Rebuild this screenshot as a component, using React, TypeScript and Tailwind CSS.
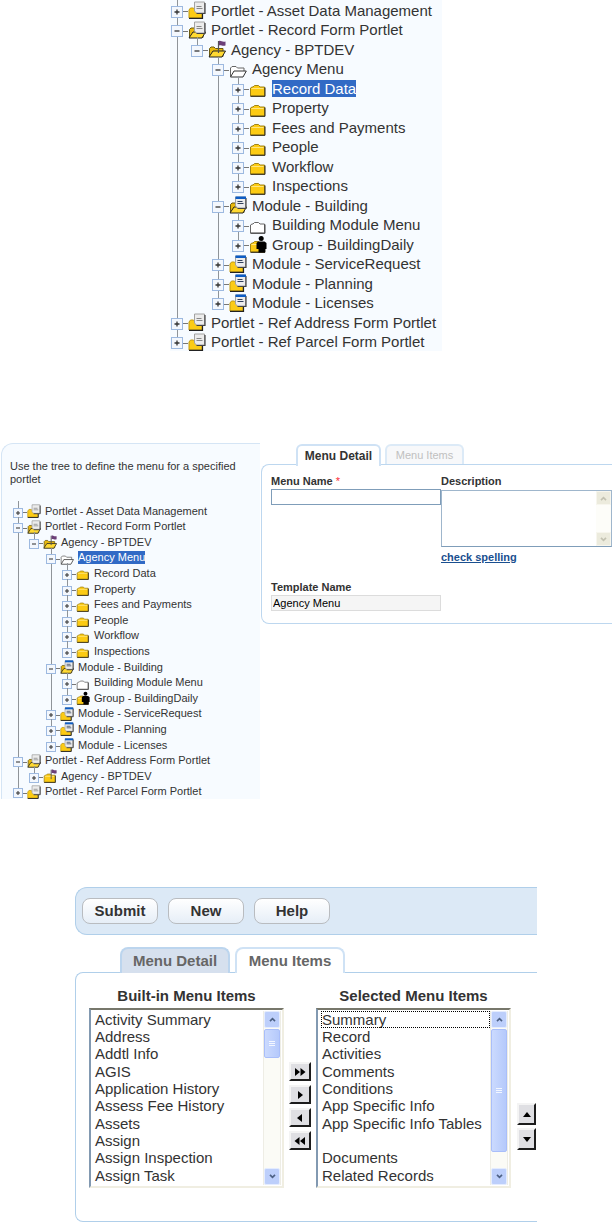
import { ReactNode } from 'react';

type IconName =
  | 'portlet'
  | 'portlet-open'
  | 'agency'
  | 'agency-open'
  | 'menu-open'
  | 'folder'
  | 'folder-white'
  | 'module'
  | 'module-open'
  | 'group';

interface TreeNode {
  depth: number;
  label: string;
  icon: IconName;
  open?: boolean;
  selected?: boolean;
}

const AGENCY_MENU_ITEMS: TreeNode[] = [
  { depth: 3, label: 'Property', icon: 'folder' },
  { depth: 3, label: 'Fees and Payments', icon: 'folder' },
  { depth: 3, label: 'People', icon: 'folder' },
  { depth: 3, label: 'Workflow', icon: 'folder' },
  { depth: 3, label: 'Inspections', icon: 'folder' },
];

const MODULES: TreeNode[] = [
  { depth: 2, label: 'Module - Building', icon: 'module-open', open: true },
  { depth: 3, label: 'Building Module Menu', icon: 'folder-white' },
  { depth: 3, label: 'Group - BuildingDaily', icon: 'group' },
  { depth: 2, label: 'Module - ServiceRequest', icon: 'module' },
  { depth: 2, label: 'Module - Planning', icon: 'module' },
  { depth: 2, label: 'Module - Licenses', icon: 'module' },
];

const RECORD_TREE: TreeNode[] = [
  { depth: 0, label: 'Portlet - Asset Data Management', icon: 'portlet' },
  { depth: 0, label: 'Portlet - Record Form Portlet', icon: 'portlet-open', open: true },
  { depth: 1, label: 'Agency - BPTDEV', icon: 'agency-open', open: true },
  { depth: 2, label: 'Agency Menu', icon: 'menu-open', open: true },
  { depth: 3, label: 'Record Data', icon: 'folder', selected: true },
  ...AGENCY_MENU_ITEMS,
  ...MODULES,
  { depth: 0, label: 'Portlet - Ref Address Form Portlet', icon: 'portlet' },
  { depth: 0, label: 'Portlet - Ref Parcel Form Portlet', icon: 'portlet' },
];

const MENU_TREE: TreeNode[] = [
  { depth: 0, label: 'Portlet - Asset Data Management', icon: 'portlet' },
  { depth: 0, label: 'Portlet - Record Form Portlet', icon: 'portlet-open', open: true },
  { depth: 1, label: 'Agency - BPTDEV', icon: 'agency-open', open: true },
  { depth: 2, label: 'Agency Menu', icon: 'menu-open', open: true, selected: true },
  { depth: 3, label: 'Record Data', icon: 'folder' },
  ...AGENCY_MENU_ITEMS,
  ...MODULES,
  { depth: 0, label: 'Portlet - Ref Address Form Portlet', icon: 'portlet-open', open: true },
  { depth: 1, label: 'Agency - BPTDEV', icon: 'agency' },
  { depth: 0, label: 'Portlet - Ref Parcel Form Portlet', icon: 'portlet' },
];

const BUILT_IN = [
  'Activity Summary',
  'Address',
  'Addtl Info',
  'AGIS',
  'Application History',
  'Assess Fee History',
  'Assets',
  'Assign',
  'Assign Inspection',
  'Assign Task',
];

const SELECTED = [
  'Summary',
  'Record',
  'Activities',
  'Comments',
  'Conditions',
  'App Specific Info',
  'App Specific Info Tables',
  '',
  'Documents',
  'Related Records',
];

// ── Tree icons, all on an 18x18 grid ──

function ClosedFolder({ white }: { white?: boolean }) {
  return (
    <>
      <path
        d="M1.5 17V9L3 8h1l1.500-1.500h4L11 8h4.500v9z"
        fill={white ? '#fff' : '#fccb14'}
        stroke={white ? '#666' : '#a08418'}
      />
      {!white && <path d="M2.500 9.500h12" stroke="#ffe680" />}
      <path d="M1.500 17.300H16V8.500" fill="none" stroke={white ? '#444' : '#2a2413'} />
    </>
  );
}

function BackFolder({ open }: { open: boolean }) {
  if (open) {
    return (
      <>
        <path d="M1.5 16.500V8.500L3 7h3l1.500 1.500H15v8z" fill="#e9b90c" stroke="#6b5a10" />
        <path d="M1 17l4-6h12.500l-3.500 6z" fill="#ffd932" stroke="#222" />
      </>
    );
  }
  return (
    <>
      <path d="M1 17V9l1.500-2h3L7 8.500h7V17z" fill="#fccb14" stroke="#c19b12" />
      <path d="M1 17.300h13.500V12" fill="none" stroke="#222" strokeWidth="1.200" />
    </>
  );
}

function Page({ header }: { header?: boolean }) {
  return (
    <>
      <path d="M6.500 1h10v11H8.500l-2-2z" fill="#ececec" stroke="#a2a2a2" />
      <path d="M8.500 12.500H17V2" fill="none" stroke="#444" strokeWidth="1.200" />
      {header && <rect x="6.500" y=".5" width="10.500" height="2.500" fill="#0d5cc4" />}
      <path d="M8.500 5.500h5M8.500 7.500h6" stroke={header ? '#33425c' : '#888'} />
    </>
  );
}

function Flag() {
  return (
    <>
      <path d="M10.500 1v12" stroke="#555" strokeWidth="1.200" />
      <path d="M11 1c2-1 3 1.500 6.500.5v4c-3.500 1-4.500-1-6.500 0z" fill="#6b3f78" />
    </>
  );
}

function Person() {
  return (
    <>
      <circle cx="12.200" cy="3.500" r="2.500" fill="#000" />
      <path d="M9 6.500h6.500L17.500 8v6H16v3.500H9.500V14H7.500V8z" fill="#000" />
    </>
  );
}

const ICONS: Record<IconName, ReactNode> = {
  portlet: <><BackFolder open={false} /><Page /></>,
  'portlet-open': <><BackFolder open /><Page /></>,
  agency: <><ClosedFolder /><Flag /></>,
  'agency-open': <><BackFolder open /><Flag /></>,
  'menu-open': (
    <>
      <path d="M1.500 16.500V8L3 6.500h4L8.500 8H15v3" fill="#fff" stroke="#666" />
      <path d="M1.500 17 5 11h12.300L14 17z" fill="#fff" stroke="#333" />
    </>
  ),
  folder: <ClosedFolder />,
  'folder-white': <ClosedFolder white />,
  module: <><BackFolder open={false} /><Page header /></>,
  'module-open': <><BackFolder open /><Page header /></>,
  group: <><ClosedFolder /><Person /></>,
};

// ── Tree ──

const TREE_SIZES = {
  lg: {
    row: 'h-5 even:h-[19px] text-[15px] leading-[17px]',
    indent: 'w-5 even:w-[21px]',
    toggle: 'size-3',
    cell: 'w-[17px]',
    line: 'left-[6px]',
    icon: 'size-[18px]',
    gap: 'ml-[5px]',
  },
  sm: {
    row: 'h-4 nth-[5n+2]:h-[15px] nth-[5n+4]:h-[15px] text-[11px] leading-[13px]',
    indent: 'w-4 even:w-[17px]',
    toggle: 'size-[10px]',
    cell: 'w-[14px]',
    line: 'left-[5px]',
    icon: 'size-[14px]',
    gap: 'ml-1',
  },
};

// True when a sibling of the given depth still follows row i
function continues(nodes: TreeNode[], i: number, depth: number) {
  for (let j = i + 1; j < nodes.length; j++) {
    if (nodes[j].depth < depth) return false;
    if (nodes[j].depth === depth) return true;
  }
  return false;
}

function Tree({ nodes, size, label }: { nodes: TreeNode[]; size: 'lg' | 'sm'; label: string }) {
  const s = TREE_SIZES[size];
  return (
    <ul aria-label={label}>
      {nodes.map((node, i) => (
        <li key={i} className={`flex whitespace-nowrap ${s.row}`}>
          {Array.from({ length: node.depth }, (_, d) => (
            <span key={d} className={`relative shrink-0 ${s.indent}`}>
              {continues(nodes, i, d) && (
                <span className={`absolute inset-y-0 w-px bg-[#8f9499] ${s.line}`} />
              )}
            </span>
          ))}
          <span className={`relative flex shrink-0 items-center pt-[3px] ${s.cell}`}>
            <span
              className={`absolute -top-[2px] w-px bg-[#8f9499] ${s.line}
                ${continues(nodes, i, node.depth) ? 'bottom-0' : 'bottom-1/2'}`}
            />
            <button
              aria-label={`${node.open ? 'Collapse' : 'Expand'} ${node.label}`}
              className={`relative shrink-0 border border-[#9db9e0] bg-[#f3f7fd] ${s.toggle}`}
            >
              <svg viewBox="0 0 10 10" className="block size-full" stroke="#333" strokeWidth="1.300">
                <path d={node.open ? 'M2.500 5h5' : 'M2.500 5h5M5 2.500v5'} />
              </svg>
            </button>
            <span className="h-px flex-1 bg-[#777]" />
          </span>
          <svg viewBox="0 0 18 18" className={`relative shrink-0 self-center ${s.icon}`} aria-hidden>
            {ICONS[node.icon]}
          </svg>
          <a
            href="#"
            className={`self-center ${s.gap} ${node.selected ? 'bg-[#316ac5] text-white' : 'text-[#333]'}`}
          >
            {node.label}
          </a>
        </li>
      ))}
    </ul>
  );
}

// ── List boxes ──

function ScrollButton({ up, className }: { up?: boolean; className: string }) {
  return (
    <button
      type="button"
      aria-label={up ? 'Scroll up' : 'Scroll down'}
      className={`flex shrink-0 items-center justify-center border ${className}`}
    >
      <svg viewBox="0 0 8 6" className="h-[5px] w-[7px]" fill="none" stroke="currentColor" strokeWidth="2">
        <path d={up ? 'M1 5l3-3 3 3' : 'M1 1l3 3 3-3'} />
      </svg>
    </button>
  );
}

function ListBox({ id, title, items, thumb, focusFirst }: {
  id: string;
  title: string;
  items: string[];
  thumb: string;
  focusFirst?: boolean;
}) {
  const scrollButton = 'h-[17px] rounded-xs border-[#e4ecff] bg-[#bdcffb] text-[#4d6185]';
  return (
    <div className="flex min-w-0 flex-1 flex-col">
      <label htmlFor={id} className="text-center text-[15px] leading-[18px] font-bold whitespace-nowrap">
        {title}
      </label>
      <div
        className="mt-[3px] flex h-[180px] border-2 border-t-[#77776b] border-r-[#f0eee2]
          border-b-[#f0eee2] border-l-[#8299b1] bg-white pt-px pr-px pb-px pl-[3px]"
      >
        <select
          id={id}
          multiple
          size={10}
          className="min-w-0 flex-1 appearance-none overflow-hidden bg-white p-0 text-[15px] text-[#333] outline-none"
        >
          {items.map((item, i) => (
            <option
              key={i}
              className={`h-[17px] min-h-0 overflow-visible p-0 pl-px leading-[17px] nth-[3n]:h-[18px]
                ${focusFirst && i === 0 ? 'outline outline-dotted -outline-offset-1 outline-black' : ''}`}
            >
              {item}
            </option>
          ))}
        </select>
        <div className="flex w-[18px] flex-col border-x border-[#eeede5] bg-[#fbfbf6]">
          <ScrollButton up className={scrollButton} />
          <div
            className={`mt-px flex items-center justify-center rounded-xs border border-[#a9befa]
              bg-linear-to-r from-[#cbdafe] to-[#b5c9fb] ${thumb}`}
          >
            <svg viewBox="0 0 6 6" className="size-[6px]" stroke="#f3f7ff">
              <path d="M0 .5h6M0 2.500h6M0 4.500h6" />
            </svg>
          </div>
          <ScrollButton className={`mt-auto ${scrollButton}`} />
        </div>
      </div>
    </div>
  );
}

const MOVE_BUTTON =
  'flex items-center justify-center border-2 border-t-[#f4f4f4] border-r-[#1c1c1c] border-b-[#1c1c1c] border-l-[#f4f4f4] bg-[#dfdfe3]';

function MoveButton({ label, path }: { label: string; path: string }) {
  return (
    <button aria-label={label} className={`h-[19px] w-[22px] ${MOVE_BUTTON}`}>
      <svg viewBox="0 0 12 8" className="h-2 w-3" fill="#000">
        <path d={path} />
      </svg>
    </button>
  );
}

function OrderButton({ label, path }: { label: string; path: string }) {
  return (
    <button aria-label={label} className={`h-[22px] w-[19px] ${MOVE_BUTTON}`}>
      <svg viewBox="0 0 8 5" className="h-[5px] w-2" fill="#000">
        <path d={path} />
      </svg>
    </button>
  );
}

// ── Sections ──

function MenuDetailForm() {
  const disabledScroll = 'h-[14px] border-[#f7f6ee] bg-[#ecebdd] text-[#c3c2b2]';
  return (
    <div className="min-w-0 flex-1 pt-px">
      <div className="relative z-10 -mb-[2px] ml-[35px] flex gap-1">
        <button className="h-[22px] w-[85px] rounded-t-md border-2 border-b-0 border-[#cfe2f5] bg-white text-[12px] font-bold">
          Menu Detail
        </button>
        <button
          disabled
          className="h-5 w-[79px] rounded-t-md border-2 border-b-0 border-[#dceaf7] bg-[#f7f8fa] text-[11px] text-[#c0c0c0]"
        >
          Menu Items
        </button>
      </div>
      <form className="grid grid-cols-[170px_1fr] rounded-l-lg border border-r-0 border-[#bdd7ef] pt-[10px] pb-3 pl-[9px] text-[11px] leading-[13px]">
        <div>
          <label htmlFor="menu-name" className="block font-bold">
            Menu Name <span className="font-normal text-red-500">*</span>
          </label>
          <input
            id="menu-name"
            type="text"
            className="mt-px block h-4 w-full border border-[#7f9db9] bg-white px-px outline-none"
          />
        </div>
        <div>
          <label htmlFor="description" className="block font-bold">Description</label>
          <div className="mt-[2px] flex h-[57px] border border-[#9fb6cc] border-b-[#7f9db9]">
            <textarea id="description" className="block min-w-0 flex-1 resize-none overflow-hidden px-px outline-none" />
            <div className="flex w-[15px] flex-col justify-between bg-[#fdfdf9]">
              <ScrollButton up className={disabledScroll} />
              <ScrollButton className={disabledScroll} />
            </div>
          </div>
          <a href="#" className="mt-1 inline-block font-bold text-[#1a4f8f] underline">
            check spelling
          </a>
        </div>
        <div className="pt-[17px]">
          <label htmlFor="template-name" className="block font-bold">Template Name</label>
          <input
            id="template-name"
            type="text"
            readOnly
            value="Agency Menu"
            className="mt-px block h-4 w-full border border-[#dcdcdc] bg-[#f5f5f5] px-px text-black outline-none"
          />
        </div>
      </form>
    </div>
  );
}

function MenuItemsEditor() {
  const tab = 'h-[26px] rounded-t-lg border-2 border-b-0 text-[15px] font-bold text-[#666]';
  return (
    <section className="mx-auto w-[462px] max-w-full">
      <div className="flex gap-[10px] rounded-l-xl border border-r-0 border-[#b0cfea] bg-[#dce9f6] pt-[10px] pb-[10px] pl-[6px]">
        {['Submit', 'New', 'Help'].map(name => (
          <button
            key={name}
            className="h-[26px] w-[76px] rounded-lg border border-[#b9bcc0] bg-linear-to-b from-white to-[#e6eef7] text-[15px] font-bold"
          >
            {name}
          </button>
        ))}
      </div>

      <div className="relative z-10 mt-3 -mb-px ml-[45px] flex gap-[5px]">
        <button className={`w-[110px] border-[#bcd5ee] bg-[#d6e0ee] ${tab}`}>Menu Detail</button>
        <button className={`w-[110px] border-[#cfe2f5] bg-white ${tab}`}>Menu Items</button>
      </div>

      <div className="flex rounded-l-lg border border-r-0 border-[#b0cfea] pt-[14px] pr-px pb-[33px] pl-[13px]">
        <ListBox id="built-in" title="Built-in Menu Items" items={BUILT_IN} thumb="h-[29px]" />
        <div className="mx-[5px] flex flex-col gap-1 pt-[75px]">
          <MoveButton label="Add all" path="M1 0l5 4-5 4zM6.500 0l5 4-5 4z" />
          <MoveButton label="Add" path="M4 0l5 4-5 4z" />
          <MoveButton label="Remove" path="M8 0L3 4l5 4z" />
          <MoveButton label="Remove all" path="M5.500 0L.5 4l5 4zM11 0L6 4l5 4z" />
        </div>
        <ListBox id="selected" title="Selected Menu Items" items={SELECTED} thumb="h-[123px]" focusFirst />
        <div className="ml-[6px] flex flex-col gap-[3px] pt-[116px]">
          <OrderButton label="Move up" path="M4 0l4 5H0z" />
          <OrderButton label="Move down" path="M4 5L0 0h8z" />
        </div>
      </div>
    </section>
  );
}

export default function App() {
  return (
    <main className="bg-white font-['Liberation_Sans',Arial,sans-serif] text-[#333]">
      <section className="mx-auto w-[272px] bg-[#f7fbff] pl-px">
        <Tree nodes={RECORD_TREE} size="lg" label="Record portlets" />
      </section>

      <section className="mt-[92px] flex items-start gap-px">
        <div className="ml-px w-[259px] shrink-0 rounded-tl-xl border-t border-l border-[#d5e5f5] bg-[#f7fbff] pt-4">
          <p className="pl-2 text-[11px] leading-[13px]">
            Use the tree to define the menu for a specified portlet
          </p>
          <div className="mt-[17px] pl-[11px]">
            <Tree nodes={MENU_TREE} size="sm" label="Menu portlets" />
          </div>
        </div>
        <MenuDetailForm />
      </section>

      <div className="mt-[88px]">
        <MenuItemsEditor />
      </div>
    </main>
  );
}
